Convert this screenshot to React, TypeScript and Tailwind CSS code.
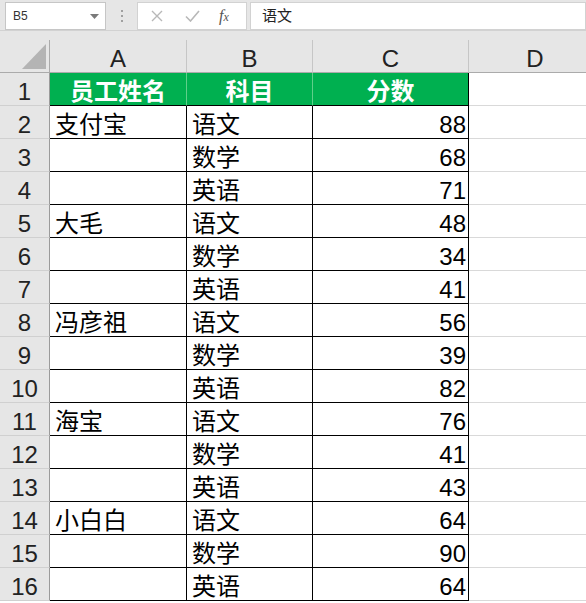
import React from "react";

const FONT = '"Liberation Sans", "Noto Sans CJK SC", sans-serif';

type Row = { name: string; subject: string; score: string };

const rows: Row[] = [
  { name: "支付宝", subject: "语文", score: "88" },
  { name: "", subject: "数学", score: "68" },
  { name: "", subject: "英语", score: "71" },
  { name: "大毛", subject: "语文", score: "48" },
  { name: "", subject: "数学", score: "34" },
  { name: "", subject: "英语", score: "41" },
  { name: "冯彦祖", subject: "语文", score: "56" },
  { name: "", subject: "数学", score: "39" },
  { name: "", subject: "英语", score: "82" },
  { name: "海宝", subject: "语文", score: "76" },
  { name: "", subject: "数学", score: "41" },
  { name: "", subject: "英语", score: "43" },
  { name: "小白白", subject: "语文", score: "64" },
  { name: "", subject: "数学", score: "90" },
  { name: "", subject: "英语", score: "64" },
];

function FormulaBar() {
  return (
    <div className="h-[40px] bg-[#e6e6e6] flex flex-col">
      <div className="h-[31px] flex items-start pt-[2px] border-b border-[#d2d2d2]">
        <div className="ml-[5px] w-[101px] h-[28px] bg-white border border-[#c6c6c6] flex items-center justify-between pl-[7px] pr-[6px]">
          <span className="text-[12px] text-[#333]">B5</span>
          <svg width="9" height="5" viewBox="0 0 9 5">
            <polygon points="0,0 9,0 4.5,5" fill="#7a7a7a" />
          </svg>
        </div>
        <div className="w-[31px] h-[28px] flex flex-col items-center justify-center gap-[3px]">
          <div className="w-[2px] h-[2px] bg-[#a0a0a0]" />
          <div className="w-[2px] h-[2px] bg-[#a0a0a0]" />
          <div className="w-[2px] h-[2px] bg-[#a0a0a0]" />
        </div>
        <div className="w-[110px] h-[28px] bg-white border border-[#d2d2d2] flex items-center">
          <svg className="ml-[13px]" width="12" height="12" viewBox="0 0 12 12">
            <path d="M1 1 L11 11 M11 1 L1 11" stroke="#b8b8b8" strokeWidth="1.4" fill="none" />
          </svg>
          <svg className="ml-[22px]" width="15" height="12" viewBox="0 0 15 12">
            <path d="M1 6.5 L5.5 11 L14 1" stroke="#b8b8b8" strokeWidth="1.6" fill="none" />
          </svg>
          <span
            className="ml-[19px] text-[16px] italic text-[#555] leading-none"
            style={{ fontFamily: '"Liberation Serif", serif' }}
          >
            f<span className="text-[12px]">x</span>
          </span>
        </div>
        <div className="ml-[3px] flex-1 h-[28px] bg-white border border-[#d2d2d2] flex items-center pl-[11px]">
          <span className="text-[15px] text-[#222]">语文</span>
        </div>
      </div>
    </div>
  );
}

const cellText = "text-[24px] leading-[26px] text-black";

export default function App() {
  return (
    <div className="w-[586px] h-[603px] overflow-hidden bg-white" style={{ fontFamily: FONT }}>
      <FormulaBar />
      <div className="grid grid-cols-[50px_137px_126px_156px_132px] auto-rows-[33px]">
        {/* column headers */}
        <div className="bg-[#e6e6e6] border-r border-b border-[#ababab] flex items-end justify-end pr-[3px] pb-[3px]">
          <svg width="24" height="25" viewBox="0 0 24 25">
            <polygon points="24,0 24,25 0,25" fill="#b4b4b4" />
          </svg>
        </div>
        {["A", "B", "C", "D"].map((c) => (
          <div
            key={c}
            className={`bg-[#e6e6e6] border-b border-[#ababab] ${c === "D" ? "" : "border-r border-r-[#c6c6c6]"} flex items-end justify-center`}
          >
            <span className="text-[24px] leading-[26px] text-[#222]">{c}</span>
          </div>
        ))}

        {/* row 1 */}
        <div className="bg-[#e6e6e6] border-r border-r-[#9b9b9b] border-b border-b-[#d0d0d0] flex items-end justify-center">
          <span className="text-[24px] leading-[26px] text-[#222]">1</span>
        </div>
        <div className="bg-[#00b050] border-r border-r-[#5fcf8a] border-b border-b-black flex items-end justify-center">
          <span className="text-[24px] leading-[26px] font-bold text-white">员工姓名</span>
        </div>
        <div className="bg-[#00b050] border-r border-r-[#5fcf8a] border-b border-b-black flex items-end justify-center">
          <span className="text-[24px] leading-[26px] font-bold text-white">科目</span>
        </div>
        <div className="bg-[#00b050] border-r border-r-black border-b border-b-black flex items-end justify-center">
          <span className="text-[24px] leading-[26px] font-bold text-white">分数</span>
        </div>
        <div className="bg-white border-b border-[#d9d9d9]" />

        {rows.map((r, i) => (
          <React.Fragment key={i}>
            <div className="bg-[#e6e6e6] border-r border-r-[#9b9b9b] border-b border-b-[#d0d0d0] flex items-end justify-center">
              <span className="text-[24px] leading-[26px] text-[#222]">{i + 2}</span>
            </div>
            <div className="bg-white border-r border-b border-black flex items-end pl-[5px]">
              <span className={cellText}>{r.name}</span>
            </div>
            <div className="bg-white border-r border-b border-black flex items-end pl-[5px]">
              <span className={cellText}>{r.subject}</span>
            </div>
            <div className="bg-white border-r border-b border-black flex items-end justify-end pr-[2px]">
              <span className={cellText}>{r.score}</span>
            </div>
            <div className="bg-white border-b border-[#d9d9d9]" />
          </React.Fragment>
        ))}
      </div>
    </div>
  );
}
